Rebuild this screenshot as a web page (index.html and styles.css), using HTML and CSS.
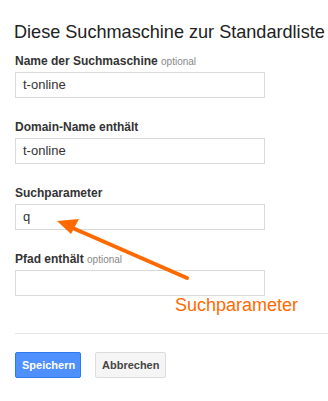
FILE: index.html
```html
<!DOCTYPE html>
<html lang="de">
<head>
<meta charset="utf-8">
<link rel="stylesheet" href="styles.css">
</head>
<body>
<div class="page">
  <h1 class="title">Diese Suchmaschine zur Standardliste</h1>
  <div class="field">
    <label class="label">Name der Suchmaschine <span class="opt">optional</span></label>
    <div class="input">t-online</div>
  </div>
  <div class="field">
    <label class="label">Domain-Name enthält</label>
    <div class="input">t-online</div>
  </div>
  <div class="field">
    <label class="label">Suchparameter</label>
    <div class="input">q</div>
  </div>
  <div class="field">
    <label class="label">Pfad enthält <span class="opt">optional</span></label>
    <div class="input"></div>
  </div>
  <hr class="divider">
  <div class="actions">
    <button class="btn btn-primary">Speichern</button>
    <button class="btn btn-secondary">Abbrechen</button>
  </div>
</div>
<svg class="arrow" width="328" height="401" viewBox="0 0 328 401">
  <line x1="187" y1="278" x2="68" y2="226" stroke="#ff6a00" stroke-width="4" stroke-linecap="round"/>
  <polygon points="57,221 79,219 71,234" fill="#ff6a00"/>
</svg>
<div class="annot">Suchparameter</div>
</body>
</html>
```
FILE: styles.css
```css
html, body {
  margin: 0;
  padding: 0;
  background: #fff;
}
body {
  font-family: "Liberation Sans", Arial, sans-serif;
  color: #222;
  position: relative;
  width: 328px;
  height: 401px;
  overflow: hidden;
}
.page {
  padding: 21px 0 0 15px;
}
.title {
  margin: 0 0 11px -1px;
  font-size: 18.1px;
  font-weight: normal;
  line-height: 22px;
  color: #222;
  white-space: nowrap;
}
.field {
  margin-bottom: 22px;
}
.label {
  display: block;
  font-size: 12px;
  font-weight: bold;
  line-height: 15px;
  color: #333;
  margin-bottom: 3px;
}
.opt {
  font-weight: normal;
  font-size: 10px;
  color: #888;
}
.input {
  box-sizing: border-box;
  width: 250px;
  height: 26px;
  border: 1px solid #d9d9d9;
  padding: 0 7px;
  font-size: 13px;
  line-height: 24px;
  color: #333;
}
.divider {
  border: 0;
  border-top: 1px solid #e5e5e5;
  height: 0;
  margin: 37px 0 18px 0;
}
.actions {
  display: flex;
  gap: 14px;
}
.btn {
  box-sizing: border-box;
  height: 26px;
  font-family: "Liberation Sans", Arial, sans-serif;
  font-size: 11px;
  font-weight: bold;
  border-radius: 2px;
  padding: 0 6px;
}
.btn-primary {
  width: 66px;
  background: #4d90fe;
  border: 1px solid #3079ed;
  color: #fff;
}
.btn-secondary {
  width: 71px;
  background: #f5f5f5;
  border: 1px solid #dcdcdc;
  color: #444;
}
.arrow {
  position: absolute;
  left: 0;
  top: 0;
  pointer-events: none;
}
.annot {
  position: absolute;
  left: 175px;
  top: 294px;
  font-size: 18px;
  line-height: 22px;
  color: #ff6a00;
}
```
